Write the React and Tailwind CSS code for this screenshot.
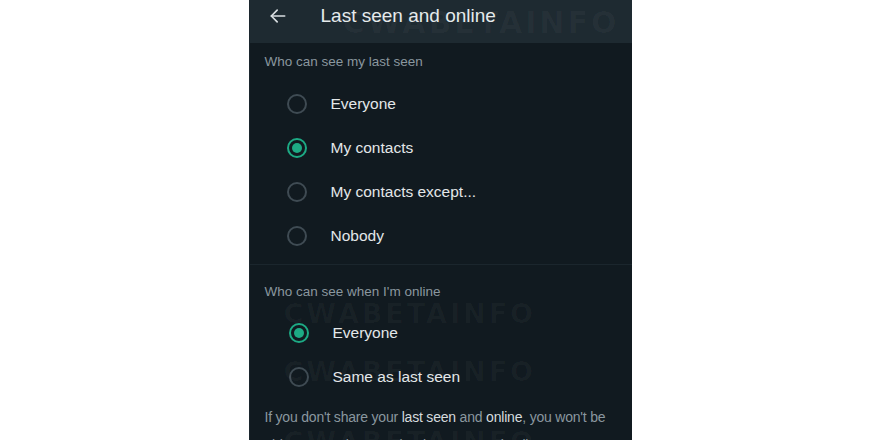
import React from 'react';

const Radio = ({ checked }) => (
    <span
        className={
            'flex h-[20px] w-[20px] shrink-0 items-center justify-center rounded-full border-2 ' +
            (checked ? 'border-[#1daa84]' : 'border-[#3f4b53]')
        }
    >
        {checked && <span className="h-[10px] w-[10px] rounded-full bg-[#1daa84]" />}
    </span>
);

const Option = ({ label, checked, shift }) => (
    <div className={'flex h-[44px] items-center gap-[24px] ' + (shift ? 'pl-[39px]' : 'pl-[37px]')}>
        <Radio checked={checked} />
        <span className="text-[15.5px] text-[#e3e7e9]">{label}</span>
    </div>
);

const Watermark = ({ className }) => (
    <div
        className={
            'pointer-events-none absolute select-none font-["DejaVu_Sans",sans-serif] font-bold tracking-[3px] text-white/[0.03] ' +
            className
        }
    >
        CWABETAINFO
    </div>
);

const App = () => {
    const lastSeen = ['Everyone', 'My contacts', 'My contacts except...', 'Nobody'];

    return (
        <div className="flex h-[440px] w-full justify-center overflow-hidden bg-white font-['Liberation_Sans',Arial,sans-serif]">
            <div className="relative w-[383px] border-l border-[#1c272e] bg-[#111a20]">
                <header className="flex h-[43px] items-center bg-[#1e2a31] pb-[11px] pl-[18px]">
                    <svg width="20" height="20" viewBox="0 0 24 24" fill="none" stroke="#d9dee1" strokeWidth="2" strokeLinecap="round" strokeLinejoin="round">
                        <path d="M20 12H4" />
                        <path d="M11 5l-7 7 7 7" />
                    </svg>
                    <h1 className="ml-[33px] text-[19px] font-normal text-[#e6eaec]">Last seen and online</h1>
                </header>

                <div className="flex h-[39px] items-center pl-[15px] text-[13.5px] text-[#8a979f]">
                    Who can see my last seen
                </div>
                {lastSeen.map((item) => (
                    <Option key={item} label={item} checked={item === 'My contacts'} />
                ))}

                <div className="mt-[6px] h-px bg-[#1b262d]" />

                <div className="flex h-[46px] items-center pl-[15px] pt-[8px] text-[13.5px] text-[#8a979f]">
                    Who can see when I'm online
                </div>
                <Option label="Everyone" checked shift />
                <Option label="Same as last seen" shift />

                <p className="pl-[15px] pr-[8px] pt-[4px] text-[14px] leading-[28px] tracking-[-0.2px] text-[#8a979f]">
                    If you don't share your <span className="text-[#d5dbde]">last seen</span> and{' '}
                    <span className="text-[#d5dbde]">online</span>, you won't be able to see other people's last seen and online.
                </p>

                <Watermark className="left-[93px] top-[0px] text-[30px]" />
                <Watermark className="left-[34px] top-[294px] text-[27px]" />
                <Watermark className="left-[34px] top-[352px] text-[27px]" />
                <Watermark className="left-[34px] top-[422px] text-[27px]" />
            </div>
        </div>
    );
};

export default App;
